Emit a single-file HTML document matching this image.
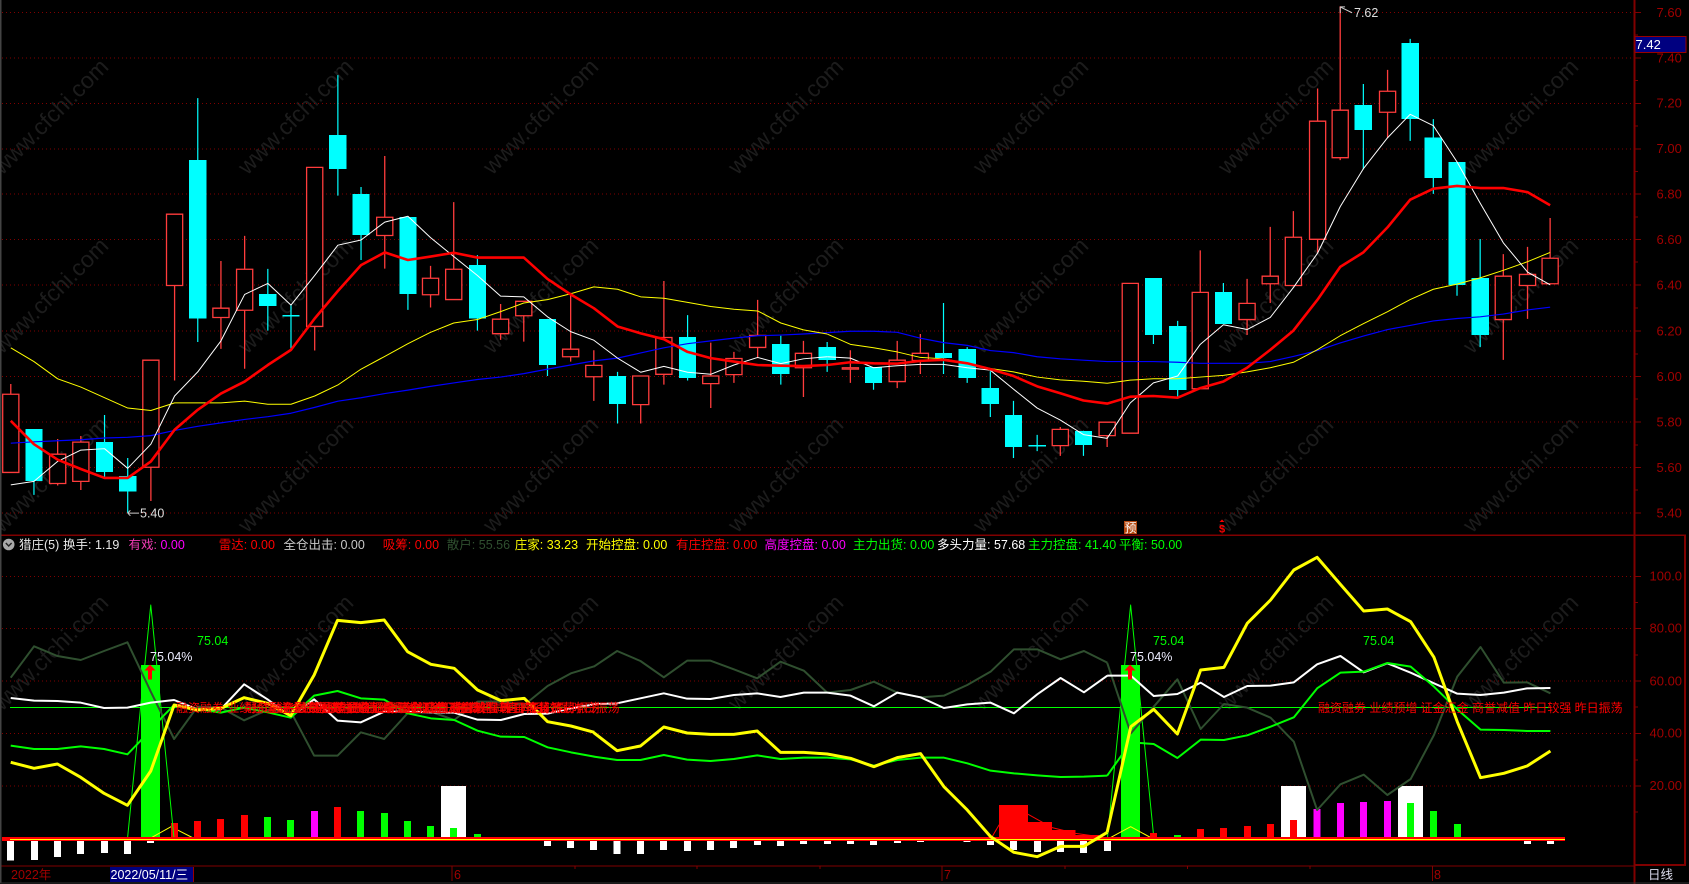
<!DOCTYPE html>
<html lang="zh">
<head>
<meta charset="utf-8">
<title>猎庄</title>
<style>
html,body{margin:0;padding:0;background:#000;width:1689px;height:884px;overflow:hidden}
svg{display:block}
svg *{vector-effect:non-scaling-stroke}
text{font-family:"Liberation Sans","Noto Sans CJK SC",sans-serif;font-size:12.5px}
.wm text{font-size:23px;fill:#1c1c1c;text-anchor:middle}
.ax text{fill:#a00000;font-size:13px}
.g{fill:none;stroke:#800000;stroke-dasharray:1 3}
.c{shape-rendering:crispEdges}
.l{fill:none;stroke-linejoin:round}
</style>
</head>
<body>
<svg width="1689" height="884" viewBox="0 0 1689 884" xmlns="http://www.w3.org/2000/svg">
<rect width="1689" height="884" fill="#000"/>

<!-- watermark -->
<g class="wm" transform="translate(5,4)">
<text transform="translate(51,118) rotate(-45)">www.cfchi.com</text>
<text transform="translate(296,118) rotate(-45)">www.cfchi.com</text>
<text transform="translate(541,118) rotate(-45)">www.cfchi.com</text>
<text transform="translate(786,118) rotate(-45)">www.cfchi.com</text>
<text transform="translate(1031,118) rotate(-45)">www.cfchi.com</text>
<text transform="translate(1276,118) rotate(-45)">www.cfchi.com</text>
<text transform="translate(1521,118) rotate(-45)">www.cfchi.com</text>
<text transform="translate(51,297) rotate(-45)">www.cfchi.com</text>
<text transform="translate(296,297) rotate(-45)">www.cfchi.com</text>
<text transform="translate(541,297) rotate(-45)">www.cfchi.com</text>
<text transform="translate(786,297) rotate(-45)">www.cfchi.com</text>
<text transform="translate(1031,297) rotate(-45)">www.cfchi.com</text>
<text transform="translate(1276,297) rotate(-45)">www.cfchi.com</text>
<text transform="translate(1521,297) rotate(-45)">www.cfchi.com</text>
<text transform="translate(51,476) rotate(-45)">www.cfchi.com</text>
<text transform="translate(296,476) rotate(-45)">www.cfchi.com</text>
<text transform="translate(541,476) rotate(-45)">www.cfchi.com</text>
<text transform="translate(786,476) rotate(-45)">www.cfchi.com</text>
<text transform="translate(1031,476) rotate(-45)">www.cfchi.com</text>
<text transform="translate(1276,476) rotate(-45)">www.cfchi.com</text>
<text transform="translate(1521,476) rotate(-45)">www.cfchi.com</text>
<text transform="translate(51,654) rotate(-45)">www.cfchi.com</text>
<text transform="translate(296,654) rotate(-45)">www.cfchi.com</text>
<text transform="translate(541,654) rotate(-45)">www.cfchi.com</text>
<text transform="translate(786,654) rotate(-45)">www.cfchi.com</text>
<text transform="translate(1031,654) rotate(-45)">www.cfchi.com</text>
<text transform="translate(1276,654) rotate(-45)">www.cfchi.com</text>
<text transform="translate(1521,654) rotate(-45)">www.cfchi.com</text>
</g>

<!-- grid -->
<path class="g c" d="M2 12.5H1634M2 58H1634M2 103.4H1634M2 148.8H1634M2 194.2H1634M2 239.6H1634M2 285H1634M2 331H1634M2 376.5H1634M2 422H1634M2 467.5H1634M2 513H1634M2 576.5H1634M2 628.5H1634M2 681H1634M2 733.5H1634M2 786H1634"/>

<!-- top panel left half -->
<g transform="scale(0.53886,0.34435)">
<path fill="none" stroke="#0ff" stroke-width="1.2" d="M63 1397V1437M194 1205V1385M237 1330V1490M367 285V993M497 781V960M540 885V1015M627 218V568M670 543V755M757 630V900M886 741V960M1016 926V1092M1146 1080V1230M1276 915V1105M1449 975V1117M1535 993V1080"/>
<path fill="none" stroke="#ff3c3c" stroke-width="1.3" d="M20 1115V1145M107 1275V1410M150 1266V1423M280 1357V1455M324 829V1105M410 758V1013M454 685V1071M584 948V1018M714 453V780M799 772V893M842 587V782M929 883V987M972 917V992M1059 850V1050M1102 1017V1164M1189 1175V1230M1232 816V1117M1319 995V1185M1362 1022V1112M1406 871V1040M1491 990V1153"/>
<path fill="#000" stroke="#ff3c3c" stroke-width="1.3" d="M5 1145h30v227h-30zM92 1319h30v85h-30zM135 1284h30v114h-30zM265 1046h30v311h-30zM309 622h30v207h-30zM395 895h30v27h-30zM439 782h30v119h-30zM569 486h30v462h-30zM699 631h30v53h-30zM784 808h30v48h-30zM827 782h30v88h-30zM914 927h30v42h-30zM957 875h30v42h-30zM1044 1014h30v22h-30zM1087 1061h30v33h-30zM1174 1092h30v83h-30zM1217 980h30v107h-30zM1304 1092h30v22h-30zM1347 1041h30v47h-30zM1391 974h30v35h-30zM1476 1026h30v42h-30z"/>
<path class="c" fill="#0ff" d="M47 1246h32v151h-32zM178 1283h32v88h-32zM221 1382h32v46h-32zM351 465h32v460h-32zM481 854h32v35h-32zM524 915h32v4h-32zM611 392h32v99h-32zM654 563h32v119h-32zM741 630h32v224h-32zM870 769h32v156h-32zM1000 926h32v134h-32zM1130 1092h32v81h-32zM1260 979h32v119h-32zM1433 999h32v87h-32zM1519 1008h32v37h-32z"/>
<polyline class="l" stroke="#00f" stroke-width="1.2" points="20,1287 63,1283 107,1280 150,1277 194,1272 237,1270 280,1265 324,1250 367,1238 410,1228 454,1218 497,1210 540,1200 584,1183 627,1165 670,1155 714,1143 757,1133 799,1122 842,1112 886,1102 929,1095 972,1085 1016,1072 1059,1060 1102,1048 1146,1040 1189,1025 1232,1010 1276,998 1319,990 1362,982 1406,975 1449,973 1491,970 1535,966"/>
<polyline class="l" stroke="#ff0" stroke-width="1" points="20,1010 63,1050 107,1100 150,1124 194,1155 237,1185 280,1192 324,1170 367,1170 410,1170 454,1165 497,1174 540,1174 584,1150 627,1118 670,1072 714,1035 757,998 799,965 842,938 886,928 929,905 972,880 1016,870 1059,853 1102,833 1146,840 1189,862 1232,866 1276,878 1319,890 1362,898 1406,903 1449,938 1491,958 1535,970"/>
<polyline class="l" stroke="#fff" stroke-width="1" points="20,1408 63,1398 107,1340 150,1307 194,1303 237,1360 280,1290 324,1150 367,1080 410,990 454,855 497,823 540,886 584,800 627,712 670,697 714,645 757,628 799,690 842,745 886,800 929,860 972,862 1016,920 1059,963 1102,988 1146,1040 1189,1081 1232,1064 1276,1081 1319,1087 1362,1060 1406,1038 1449,1056 1491,1042 1535,1036"/>
<polyline class="l" stroke="#f00" stroke-width="2.6" points="20,1222 63,1290 107,1335 150,1362 194,1388 237,1388 280,1340 324,1248 367,1190 410,1143 454,1108 497,1060 540,1016 584,925 627,845 670,770 714,733 757,755 799,745 842,734 886,748 929,748 972,748 1016,810 1059,855 1102,895 1146,948 1189,968 1232,985 1276,1022 1319,1040 1362,1050 1406,1060 1449,1062 1491,1063 1535,1060"/>
<path fill="none" stroke="#ccc" stroke-width="1" d="M237 1490H258M237 1490l5 -8M237 1490l5 8"/>
</g>

<!-- top panel right half -->
<g transform="translate(845,0) scale(0.53827,0.34435)">
<path fill="none" stroke="#0ff" stroke-width="1.2" d="M53 1112V1132M183 880V1086M227 1008V1112M270 1078V1211M313 1164V1330M357 1263V1310M443 1251V1324M573 973V999M618 932V1153M703 822V941M963 244V492M1050 113V409M1093 346V563M1137 827V859M1180 694V1008"/>
<path fill="none" stroke="#ff3c3c" stroke-width="1.3" d="M10 1017V1112M97 990V1127M140 970V1086M400 1240V1324M487 1265V1298M660 727V1129M747 810V973M790 659V880M833 613V829M878 257V735M920 18V465M1008 203V400M1223 738V1045M1268 717V926M1310 633V824"/>
<path fill="#000" stroke="#ff3c3c" stroke-width="1.3" d="M-5 1068h30v4h-30zM82 1046h30v62h-30zM125 1026h30v21h-30zM385 1247h30v47h-30zM472 1226h30v39h-30zM515 823h30v435h-30zM645 849h30v280h-30zM732 881h30v47h-30zM775 802h30v22h-30zM818 689h30v140h-30zM863 352h30v343h-30zM905 320h30v138h-30zM993 265h30v61h-30zM1208 802h30v126h-30zM1253 797h30v32h-30zM1295 750h30v74h-30z"/>
<path class="c" fill="#0ff" d="M37 1066h32v46h-32zM167 1025h32v15h-32zM211 1013h32v85h-32zM254 1127h32v46h-32zM297 1205h32v93h-32zM341 1292h32v5h-32zM427 1251h32v41h-32zM557 807h32v166h-32zM602 947h32v185h-32zM687 848h32v93h-32zM947 305h32v72h-32zM1034 125h32v220h-32zM1077 399h32v118h-32zM1121 470h32v357h-32zM1164 807h32v166h-32z"/>
<polyline class="l" stroke="#00f" stroke-width="1.2" points="-33,966 10,962 53,962 97,965 140,982 183,995 227,1003 270,1018 313,1024 357,1036 400,1042 443,1046 487,1050 530,1050 573,1050 618,1052 660,1055 703,1055 747,1055 790,1050 833,1035 878,1018 920,996 963,976 1008,957 1050,945 1093,932 1137,925 1180,920 1223,912 1268,900 1310,892"/>
<polyline class="l" stroke="#ff0" stroke-width="1" points="-33,970 10,1000 53,1010 97,1022 140,1038 183,1042 227,1055 270,1070 313,1080 357,1095 400,1103 443,1107 487,1113 530,1104 573,1100 618,1100 660,1095 703,1090 747,1080 790,1068 833,1052 878,1015 920,975 963,940 1008,905 1050,870 1093,840 1137,825 1180,807 1223,785 1268,760 1310,733"/>
<polyline class="l" stroke="#fff" stroke-width="1" points="-33,1036 10,1040 53,1068 97,1062 140,1058 183,1058 227,1068 270,1075 313,1130 357,1185 400,1220 443,1262 487,1273 530,1170 573,1112 618,1092 660,1000 703,943 747,957 790,922 833,835 878,735 920,600 963,490 1008,400 1050,332 1093,365 1137,470 1180,590 1223,705 1268,790 1310,827"/>
<polyline class="l" stroke="#f00" stroke-width="2.6" points="-33,1060 10,1052 53,1055 97,1056 140,1048 183,1045 227,1055 270,1072 313,1092 357,1122 400,1142 443,1163 487,1172 530,1152 573,1150 618,1155 660,1127 703,1108 747,1068 790,1016 833,960 878,870 920,775 963,733 1008,660 1050,580 1093,548 1137,540 1180,546 1223,546 1268,558 1310,596"/>
<path fill="none" stroke="#ccc" stroke-width="1" d="M920 20L942 37M920 20l9 0M920 20l0 18"/>
</g>

<text x="140" y="517.5" fill="#ddd">5.40</text>
<text x="1354" y="17" fill="#ddd">7.62</text>
<rect x="1124" y="521" width="13" height="13" fill="#b5480f"/>
<text x="1124.5" y="532" fill="#fff" style="font-size:12px">预</text>
<path d="M1222 519.5l-2.5 2.5h5z" fill="#f00"/>
<text x="1219" y="532.5" fill="#f00" style="font-size:11px;font-weight:bold">$</text>

<!-- lower panel: left -->
<g transform="translate(0,525) scale(0.38265,0.33333)">
<rect class="c" x="1152" y="783" width="66" height="157" fill="#fff"/>
<path class="c" fill="#0f0" d="M368 420h50v523h-50z"/>
<polyline class="l" stroke="#ff0" stroke-width="1" points="385,945 447,905 510,942"/>
<path class="c" fill="none" stroke="#fff" stroke-width="7" d="M27 943V1007M90 943V1005M150 943V996M210 943V987M273 943V984M333 943V987M393 943V954M1431 943V963M1491 943V969M1551 943V975"/>
<path class="c" fill="none" stroke="#f00" stroke-width="7" d="M456 943V894M516 943V888M576 943V882M639 943V870M882 943V846"/>
<path class="c" fill="none" stroke="#0f0" stroke-width="7" d="M699 943V876M759 943V885M942 943V858M1005 943V864M1065 943V888M1125 943V903M1185 943V909M1248 943V927M1309 943V939"/>
<path class="c" fill="none" stroke="#f0f" stroke-width="7" d="M822 943V858"/>
<polyline class="l" stroke="#0f0" stroke-width="1" points="333,943 394,240 455,943"/>
</g>

<!-- lower panel: middle -->
<g transform="translate(580,525) scale(0.38265,0.33333)">
<path class="c" fill="#f00" d="M1095 840h76v103h-76zM1171 891h63v52h-63zM1234 915h61v28h-61zM1295 930h61v13h-61zM1356 938h61v5h-61zM1417 936h91v7h-91zM1490 924h18v19h-18z"/>
<path class="c" fill="#0f0" d="M1414 420h50v523h-50z"/>
<path class="c" fill="none" stroke="#fff" stroke-width="7" d="M35 943V975M97 943V987M158 943V987M218 943V975M281 943V978M341 943V975M401 943V969M464 943V960M524 943V963M584 943V957M647 943V957M707 943V957M767 943V960M830 943V954M890 943V951M950 943V947M1012 943V951M1073 943V960M1133 943V975M1195 943V981M1256 943V981M1316 943V984M1378 943V978"/>
<polyline class="l" stroke="#0f0" stroke-width="1" points="1378,943 1439,240 1500,943"/>
<polyline class="l" stroke="#ff0" stroke-width="1" points="1378,943 1439,905 1500,943"/>
<polyline class="l" stroke="#f00" stroke-width="1" points="1073,943 1095,900 1171,868 1234,908 1295,925 1356,935"/>
</g>

<!-- lower panel: right bars -->
<g transform="translate(1100,525) scale(0.37566,0.33333)">
<path class="c" fill="#fff" d="M482 783h67v157h-67zM793 783h67v157h-67z"/>
<path class="c" fill="none" stroke="#fff" stroke-width="7" d="M1075 943V947M1138 943V957M1199 943V957"/>
<path class="c" fill="none" stroke="#f00" stroke-width="7" d="M143 943V924M267 943V912M329 943V909M392 943V903M454 943V897M515 943V885"/>
<path class="c" fill="none" stroke="#0f0" stroke-width="7" d="M206 943V930M826 943V834M888 943V858M951 943V897M1013 943V936"/>
<path class="c" fill="none" stroke="#f0f" stroke-width="7" d="M578 943V852M640 943V834M702 943V831M765 943V828"/>
</g>

<!-- 50 line and baseline -->
<path class="c" stroke="#0f0" stroke-width="1" d="M10 707.5H1551"/>
<rect class="c" x="2" y="837" width="1563" height="4" fill="#f00"/>
<rect class="c" x="10" y="839" width="1555" height="1" fill="#ff0"/>

<!-- lower lines: left -->
<g transform="translate(0,525) scale(0.38265,0.33333)">
<polyline class="l" stroke="#2f4f2f" stroke-width="2" points="28,458 89,364 150,393 211,405 272,378 333,352 394,500 455,642 516,545 577,548 638,586 699,555 760,560 821,692 882,692 943,622 1004,642 1065,565 1126,560 1187,585 1248,530 1309,530 1370,540 1431,483 1492,445 1553,424"/>
<polyline class="l" stroke="#fff" stroke-width="2" points="28,519 89,527 150,528 211,533 272,549 333,548 394,533 455,525 516,553 577,553 638,478 699,523 760,575 821,523 882,587 943,592 1004,560 1065,560 1126,562 1187,563 1248,584 1309,585 1370,567 1431,566 1492,550 1553,538"/>
<polyline class="l" stroke="#0f0" stroke-width="2" points="28,662 89,672 150,672 211,664 272,672 333,688 365,650 425,575 455,540 516,552 577,563 638,548 699,562 760,578 821,512 882,498 943,520 1004,524 1065,565 1126,580 1187,585 1248,617 1309,635 1370,636 1431,667 1492,682 1553,695"/>
<polyline class="l" stroke="#ff0" stroke-width="3" points="28,712 89,730 150,717 211,757 272,805 333,841 394,738 455,540 516,555 577,550 638,518 699,535 760,572 821,450 882,286 943,293 1004,285 1065,380 1126,418 1187,430 1248,495 1309,527 1370,520 1431,590 1492,603 1553,622"/>
</g>

<!-- lower lines: middle -->
<g transform="translate(580,525) scale(0.38265,0.33333)">
<polyline class="l" stroke="#2f4f2f" stroke-width="2" points="36,425 97,378 158,408 219,457 280,407 341,407 402,433 463,460 524,410 585,437 646,503 707,495 768,470 829,503 890,517 951,512 1012,480 1073,440 1134,373 1195,373 1256,403 1317,378 1378,413"/>
<polyline class="l" stroke="#fff" stroke-width="2" points="36,537 97,535 158,520 219,505 280,521 341,522 402,510 463,505 524,516 585,503 646,503 707,512 768,544 829,503 890,517 951,549 1012,538 1073,533 1134,565 1195,508 1256,459 1317,502 1378,452"/>
<polyline class="l" stroke="#0f0" stroke-width="2" points="36,695 97,705 158,705 219,690 280,704 341,708 402,702 463,691 524,702 585,698 646,698 707,703 768,722 829,705 890,698 951,698 1012,715 1073,737 1134,745 1195,751 1256,756 1317,755 1378,752"/>
<polyline class="l" stroke="#ff0" stroke-width="3" points="36,623 97,677 158,663 219,606 280,624 341,628 402,628 463,618 524,682 585,682 646,687 707,700 768,725 829,698 890,686 951,785 1012,855 1073,935 1134,982 1195,995 1256,964 1317,964 1378,922"/>
</g>

<!-- lower lines: right -->
<g transform="translate(1100,525) scale(0.37566,0.33333)">
<polyline class="l" stroke="#2f4f2f" stroke-width="2" points="19,413 82,625 143,545 206,463 268,612 330,537 392,548 454,578 516,650 578,855 640,778 702,749 765,810 827,762 889,630 951,455 1013,366 1075,473 1137,472 1199,505"/>
<polyline class="l" stroke="#fff" stroke-width="2" points="19,452 82,452 143,513 206,507 268,473 330,516 392,483 454,482 516,472 578,418 640,393 702,442 765,415 827,443 889,475 951,506 1013,510 1075,503 1137,490 1199,489"/>
<polyline class="l" stroke="#0f0" stroke-width="2" points="19,752 82,652 143,657 206,699 268,644 330,645 392,631 454,605 516,577 578,490 640,443 702,440 765,414 827,425 889,485 951,553 1013,614 1075,615 1137,618 1199,618"/>
<polyline class="l" stroke="#ff0" stroke-width="3" points="19,922 82,605 143,553 206,627 268,435 330,427 392,295 454,225 516,135 578,97 640,178 702,258 765,252 827,290 889,397 951,590 1013,758 1075,745 1137,723 1199,678"/>
</g>

<!-- red signal text -->
<g>
<text x="176" y="712" fill="#f00" style="font-size:12px">融资融券 业绩预增 证金汇金 商誉减值 昨日较强 昨日振荡</text>
<text x="245" y="712" fill="#f00" style="font-size:12px">融资融券 业绩预增 证金汇金 商誉减值 昨日较强 昨日振荡</text>
<text x="270" y="712" fill="#f00" style="font-size:12px">融资融券 业绩预增 证金汇金 商誉减值 昨日较强 昨日振荡</text>
<text x="295" y="712" fill="#f00" style="font-size:12px">融资融券 业绩预增 证金汇金 商誉减值 昨日较强 昨日振荡</text>
<text x="315" y="712" fill="#f00" style="font-size:12px">融资融券 业绩预增 证金汇金 商誉减值 昨日较强 昨日振荡</text>
<text x="1318" y="712" fill="#f00" style="font-size:12px">融资融券 业绩预增 证金汇金 商誉减值 昨日较强 昨日振荡</text>
</g>

<!-- percent labels and arrows -->
<text x="150" y="661" fill="#eef">75.04%</text>
<text x="1130" y="661" fill="#eef">75.04%</text>
<text x="197" y="645" fill="#0f0">75.04</text>
<text x="1153" y="645" fill="#0f0">75.04</text>
<text x="1363" y="645" fill="#0f0">75.04</text>
<path d="M150 664.5l5.5 6h-3.5v9h-4v-9h-3.5z" fill="#f00"/>
<path d="M1130 664.5l5.5 6h-3.5v9h-4v-9h-3.5z" fill="#f00"/>

<!-- frame -->
<g class="c" fill="none" stroke="#800000">
<path stroke-width="2" d="M1634.5 0V884"/>
<path stroke-width="1.5" d="M0 535.3H1686"/>
<path stroke-width="1" d="M0 866H1634"/>
<path stroke-width="2" d="M1634 865H1686M1685 535V865"/>
<path stroke-width="1" d="M1635 12.5h6M1635 58h6M1635 103.4h6M1635 148.8h6M1635 194.2h6M1635 239.6h6M1635 285h6M1635 331h6M1635 376.5h6M1635 422h6M1635 467.5h6M1635 513h6M1635 35h3M1635 80.7h3M1635 126h3M1635 171.5h3M1635 217h3M1635 262h3M1635 308h3M1635 354h3M1635 399h3M1635 445h3M1635 490h3M1635 576.5h6M1635 628.5h6M1635 681h6M1635 733.5h6M1635 786h6M1635 602.5h3M1635 655h3M1635 707h3M1635 760h3M1635 812h3"/>
<path stroke-width="1" d="M452 866V881M942 866V881M1432.5 866V881M575 866V869M697 866V869M820 866V869M1065 866V869M1187.5 866V869M1310 866V869"/>
</g>
<path class="c" stroke="#444" stroke-width="1.5" d="M0.7 0V883"/>
<path class="c" stroke="#333" stroke-width="1" d="M0 883H1689"/>

<!-- axis labels -->
<g class="ax">
<text x="1656.5" y="17">7.60</text>
<text x="1656.5" y="62.5">7.40</text>
<text x="1656.5" y="107.5">7.20</text>
<text x="1656.5" y="153">7.00</text>
<text x="1656.5" y="198.5">6.80</text>
<text x="1656.5" y="244">6.60</text>
<text x="1656.5" y="289.5">6.40</text>
<text x="1656.5" y="335.5">6.20</text>
<text x="1656.5" y="381">6.00</text>
<text x="1656.5" y="426.5">5.80</text>
<text x="1656.5" y="472">5.60</text>
<text x="1656.5" y="517.5">5.40</text>
<text x="1649.5" y="580.5">100.0</text>
<text x="1649.5" y="632.5">80.00</text>
<text x="1649.5" y="685.5">60.00</text>
<text x="1649.5" y="737.5">40.00</text>
<text x="1649.5" y="790">20.00</text>
</g>
<rect class="c" x="1635" y="36.5" width="51" height="16" fill="#000080" stroke="#900" stroke-width="1"/>
<text x="1635.5" y="49" fill="#fff" style="font-size:13px">7.42</text>

<!-- header -->
<circle cx="8.7" cy="544.5" r="5.8" fill="#a8a8a8"/>
<path d="M5.8 543l2.9 3 2.9-3" fill="none" stroke="#222" stroke-width="1.4"/>
<g>
<text x="19" y="549" fill="#e8e8e8">猎庄(5)</text>
<text x="63" y="549" fill="#e8e8e8">换手: 1.19</text>
<text x="128.5" y="549" fill="#f03cb4">有戏: <tspan fill="#f0f">0.00</tspan></text>
<text x="218.7" y="549" fill="#f00">雷达: 0.00</text>
<text x="283.5" y="549" fill="#c8c8c8">全仓出击: 0.00</text>
<text x="382.8" y="549" fill="#f00">吸筹: 0.00</text>
<text x="446.8" y="549" fill="#2f4f2f">散户: 55.56</text>
<text x="514.8" y="549" fill="#ff0">庄家: 33.23</text>
<text x="586" y="549" fill="#ff0">开始控盘: 0.00</text>
<text x="676" y="549" fill="#f00">有庄控盘: 0.00</text>
<text x="764.5" y="549" fill="#f0f">高度控盘: 0.00</text>
<text x="853" y="549" fill="#0f0">主力出货: 0.00</text>
<text x="937" y="549" fill="#fff">多头力量: 57.68</text>
<text x="1028" y="549" fill="#0f0">主力控盘: 41.40</text>
<text x="1119" y="549" fill="#0f0">平衡: 50.00</text>
</g>

<!-- date axis -->
<text x="11" y="879" fill="#a00000">2022年</text>
<rect class="c" x="110" y="867" width="83" height="15" fill="#000080"/>
<path class="c" stroke="#900" stroke-width="1" d="M193.5 867V882"/>
<text x="110.5" y="879" fill="#fff">2022/05/11/三</text>
<text x="454" y="879" fill="#a00000">6</text>
<text x="944" y="879" fill="#a00000">7</text>
<text x="1434" y="879" fill="#a00000">8</text>
<text x="1648" y="879" fill="#dde">日线</text>
</svg>
</body>
</html>
